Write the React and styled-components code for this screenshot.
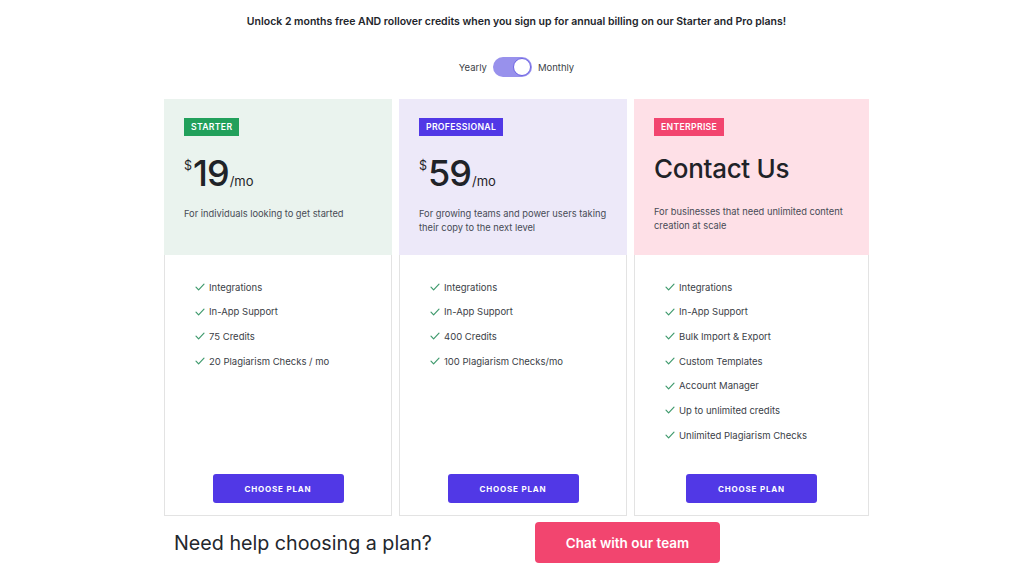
import styled, { createGlobalStyle } from "styled-components";

const GlobalStyle = createGlobalStyle`
    * { box-sizing: border-box; }
    body {
        margin: 0;
        background: #ffffff;
        font-family: Inter, "Noto Sans", sans-serif;
        color: #1f2328;
    }
`

const Page = styled.div`
    width: 1024px;
    padding: 14px 0 0 9px;
    display: flex;
    flex-direction: column;
    align-items: center;
`

const Banner = styled.p`
    margin: 0;
    font-size: 10.5px;
    line-height: 16px;
    font-weight: 600;
    color: #22252b;
`

const ToggleRow = styled.div`
    margin-top: 27px;
    display: flex;
    align-items: center;
    gap: 6px;
    font-size: 9.5px;
    color: #3b3f47;
`

const Switch = styled.div`
    width: 39px;
    height: 20px;
    border-radius: 10px;
    background: #9891ec;
    display: flex;
    justify-content: flex-end;
    align-items: center;
    padding: 1px;
`

const Knob = styled.div`
    width: 18px;
    height: 18px;
    border-radius: 50%;
    background: #fff;
    border: 1.5px solid #6d63e4;
`

const Grid = styled.div`
    margin-top: 22px;
    display: grid;
    grid-template-columns: 228px 228px 235px;
    gap: 7px;
`

const Card = styled.div`
    display: flex;
    flex-direction: column;
    height: 417px;
    border: 1px solid #e3e3e3;
    background: #fff;
`

const Head = styled.div`
    height: 156px;
    margin: -1px -1px 0;
    background: ${p => p.$bg};
    padding: 19px 12px 0 20px;
`

const Badge = styled.div`
    width: fit-content;
    height: 18px;
    line-height: 18px;
    padding: 0 7px;
    background: ${p => p.$color};
    color: #fff;
    font-size: 8.7px;
    font-weight: 600;
    letter-spacing: 0.3px;
`

const Price = styled.div`
    margin-top: 17px;
    display: flex;
    align-items: baseline;
    height: 40px;
    line-height: 40px;
`

const Dollar = styled.span`
    font-size: 12.5px;
    align-self: flex-start;
    line-height: 20px;
    margin-top: 3px;
    margin-right: 1px;
`

const Amount = styled.span`
    font-size: 36px;
    font-weight: 500;
    letter-spacing: -1px;
`

const Per = styled.span`
    font-size: 13px;
    margin-left: 1px;
`

const Title = styled.div`
    margin-top: 17px;
    font-size: 26px;
    line-height: 32px;
    font-weight: 500;
    letter-spacing: -0.3px;
`

const Desc = styled.p`
    margin: ${p => (p.$wide ? "20px" : "14px")} 0 0;
    font-size: 9.3px;
    line-height: 14px;
    color: #474b55;
    white-space: nowrap;
`

const Body = styled.div`
    flex: 1;
    display: flex;
    flex-direction: column;
    align-items: center;
    padding: 24px 0 12px;
`

const Features = styled.ul`
    list-style: none;
    margin: 0;
    padding: 0 0 0 30px;
    align-self: stretch;
    flex: 1;
    display: flex;
    flex-direction: column;
    gap: 8.7px;
`

const Feature = styled.li`
    display: flex;
    align-items: center;
    gap: 4px;
    height: 16px;
    font-size: 9.5px;
    color: #3a3e47;
`

const ChooseButton = styled.button`
    width: 131px;
    height: 29px;
    border: none;
    border-radius: 3px;
    background: #5138e6;
    color: #fff;
    font-family: inherit;
    font-size: 8px;
    font-weight: 700;
    letter-spacing: 0.8px;
`

const Footer = styled.div`
    width: 705px;
    margin-top: 6px;
    display: flex;
    align-items: center;
`

const Help = styled.span`
    padding-left: 10px;
    font-size: 19.7px;
    color: #24272d;
`

const ChatButton = styled.button`
    margin-left: auto;
    margin-right: 149px;
    width: 185px;
    height: 41px;
    border: none;
    border-radius: 4px;
    background: #f2456f;
    color: #fff;
    font-family: inherit;
    font-size: 13.5px;
    font-weight: 600;
`

const Check = () => (
    <svg width="10" height="8" viewBox="0 0 10 8" fill="none">
        <path d="M1 4.2 L3.6 6.8 L9 1.2" stroke="#3f9a6d" strokeWidth="1.2" strokeLinecap="round" strokeLinejoin="round" />
    </svg>
)

const plans = [
    {
        name: "STARTER",
        color: "#22a05b",
        bg: "#eaf3ee",
        price: "19",
        desc: "For individuals looking to get started",
        features: ["Integrations", "In-App Support", "75 Credits", "20 Plagiarism Checks / mo"],
    },
    {
        name: "PROFESSIONAL",
        color: "#5138e6",
        bg: "#ede9f9",
        price: "59",
        desc: <>For growing teams and power users taking<br />their copy to the next level</>,
        features: ["Integrations", "In-App Support", "400 Credits", "100 Plagiarism Checks/mo"],
    },
    {
        name: "ENTERPRISE",
        color: "#f2456f",
        bg: "#fee0e7",
        title: "Contact Us",
        desc: <>For businesses that need unlimited content<br />creation at scale</>,
        features: [
            "Integrations",
            "In-App Support",
            "Bulk Import & Export",
            "Custom Templates",
            "Account Manager",
            "Up to unlimited credits",
            "Unlimited Plagiarism Checks",
        ],
    },
]

export default function App() {
    return (
        <>
            <GlobalStyle />
            <Page>
                <Banner>Unlock 2 months free AND rollover credits when you sign up for annual billing on our Starter and Pro plans!</Banner>
                <ToggleRow>
                    <span>Yearly</span>
                    <Switch><Knob /></Switch>
                    <span>Monthly</span>
                </ToggleRow>
                <Grid>
                    {plans.map(plan => (
                        <Card key={plan.name}>
                            <Head $bg={plan.bg}>
                                <Badge $color={plan.color}>{plan.name}</Badge>
                                {plan.title ? (
                                    <Title>{plan.title}</Title>
                                ) : (
                                    <Price>
                                        <Dollar>$</Dollar>
                                        <Amount>{plan.price}</Amount>
                                        <Per>/mo</Per>
                                    </Price>
                                )}
                                <Desc $wide={!!plan.title}>{plan.desc}</Desc>
                            </Head>
                            <Body>
                                <Features>
                                    {plan.features.map(f => (
                                        <Feature key={f}><Check />{f}</Feature>
                                    ))}
                                </Features>
                                <ChooseButton>CHOOSE PLAN</ChooseButton>
                            </Body>
                        </Card>
                    ))}
                </Grid>
                <Footer>
                    <Help>Need help choosing a plan?</Help>
                    <ChatButton>Chat with our team</ChatButton>
                </Footer>
            </Page>
        </>
    )
}
